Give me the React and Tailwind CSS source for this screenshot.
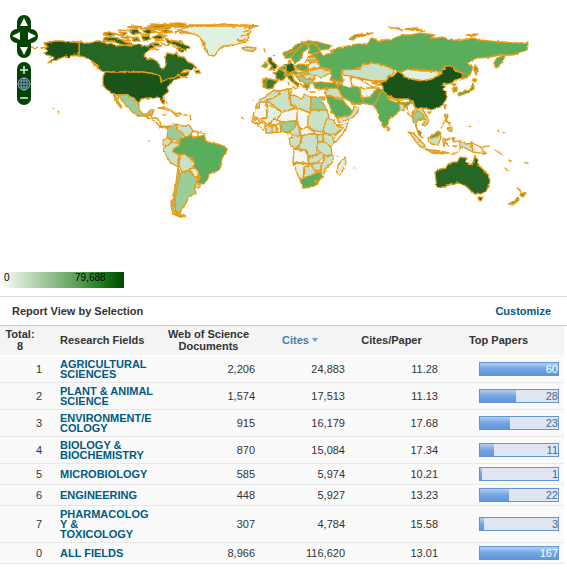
import React from 'react';
import clsx from 'clsx';

const SHADES = {
  top: '#1a5419',
  high: '#266726',
  upper: '#338033',
  mid: '#5aad5a',
  low: '#9acd9a',
  pale: '#c8e1c7',
  faint: '#e0f1df',
  none: '#f4f8f4',
};

// [shade, path] pairs, larger land first so small neighbours sit on top
const COUNTRIES = [
  // North America
  ['high', 'M79 42 85 43 90 43 97 41 103 42 107 44 111 43 116 46 124 45 131 46 138 44 143 46 148 46 151 44 155 47 152 49 146 52 144 56 147 59 153 59 158 62 160 66 163 69 166 65 165 58 167 53 172 54 177 53 180 57 184 57 188 62 193 64 196 68 190 70 184 70 181 73 189 72 188 75 185 77 181 77 179 75 174 78 168 79 162 82 160 76 155 74 143 72 105 72 100 70 97 65 92 61 87 58 79 56Z'],
  ['top', 'M44 43 50 42 55 41 62 41 67 42 79 42 79 56 74 55 69 58 66 56 61 58 57 60 48 63 54 58 51 56 47 55 44 53 48 51 46 49 41 48 48 47 45 45Z'],
  ['top', 'M105 72 143 72 155 74 160 76 161 82 168 79 174 78 180 75 180 78 174 80 171 83 169 85 168 90 167 93 163 96 163 99 164 104 162 103 160 98 157 97 151 99 148 98 141 99 139 103 136 101 134 98 131 97 127 95 117 95 113 94 109 91 106 89 103 85 103 77Z'],
  ['low', 'M117 95 127 95 131 97 134 98 136 101 139 104 139 110 143 114 148 114 150 110 154 110 152 115 148 117 144 116 138 116 132 112 130 109 126 106 123 101Z'],
  ['low', 'M113 94 117 98 119 103 122 107 121 108 117 103Z'],
  ['none', 'M147 117 150 114 152 118 157 118 160 122 161 126 165 127 169 126 168 128 164 128 160 127 156 122 151 119Z'],
  ['faint', 'M175 32 184 28 194 26 210 26 222 24 236 25 245 25 258 26 249 28 251 32 247 34 249 37 246 42 241 43 234 45 228 46 223 46 219 49 217 53 214 56 209 55 206 51 204 48 205 43 202 40 198 36 194 34 186 33Z'],
  ['high', 'M150 27 157 25 167 24 179 23 190 25 183 27 175 27 168 29 161 29Z'],
  ['high', 'M165 38 170 41 176 41 181 42 185 45 190 47 187 49 183 52 177 50 179 47 172 44 168 43Z'],
  ['high', 'M104 38 111 37 118 38 125 42 130 43 133 45 124 45 117 43 111 41 103 42Z'],
  ['high', 'M104 33 110 32 115 35 109 36ZM119 32 127 33 124 35ZM128 30 137 29 140 33 133 35ZM142 31 149 29 155 32 148 34ZM141 36 149 36 151 39 144 41ZM152 37 159 35 165 37 157 40ZM152 43 158 43 161 46 154 46ZM121 37 127 37 129 39ZM161 31 168 30 173 32 165 33ZM132 38 138 37 140 41 134 41ZM128 27 135 26 142 27 136 28Z'],
  ['high', 'M194 71 199 70 201 73 196 73Z'],
  ['pale', 'M242 48 247 47 256 48 255 50 249 51 244 50Z'],
  ['none', 'M158 108 164 107 171 110 175 112 171 112 165 109ZM173 114 180 113 182 115 176 116ZM184 115 187 115ZM165 101 167 103ZM190 115 191 120ZM163 115 166 115Z'],
  // South America
  ['low', 'M168 128 173 124 177 125 177 130 182 132 182 138 180 142 173 140 167 137Z'],
  ['pale', 'M177 124 183 126 190 126 193 131 190 135 185 138 182 132 177 130Z'],
  ['none', 'M193 131 198 132 205 134 203 137 193 137 191 134ZM198 132 198 137Z'],
  ['mid', 'M180 142 179 139 183 138 190 135 193 138 198 137 204 135 206 141 212 143 222 145 227 149 226 153 222 158 221 165 219 170 215 172 209 174 207 180 202 185 197 182 200 178 198 172 193 165 192 160 185 154 180 155 173 152 174 148 179 146Z'],
  ['pale', 'M163 148 167 146 172 142 179 143 179 146 174 148 173 152 179 155 178 167 170 162 166 155Z'],
  ['pale', 'M163 140 168 138 172 141 167 146 163 145Z'],
  ['pale', 'M180 155 185 154 192 160 195 163 192 168 188 172 182 172 179 165Z'],
  ['faint', 'M189 169 195 168 198 173 199 177 195 177Z'],
  ['low', 'M182 172 188 171 195 177 199 178 195 183 195 190 196 193 188 197 187 202 182 208 180 213 175 212 175 203 176 193 178 180Z'],
  ['pale', 'M196 183 201 186 198 188 195 187Z'],
  ['low', 'M178 167 180 175 178 183 176 193 174 203 176 212 184 216 180 217 173 214 171 206 173 197 176 183Z'],
  // Europe
  ['mid', 'M320 52 323 55 333 53 330 51 337 48 344 47 352 45 360 44 368 44 371 38 375 39 379 42 381 40 390 40 395 38 403 35 411 35 420 33 427 34 435 35 430 38 437 38 443 37 450 40 463 40 472 38 480 40 489 41 498 42 505 42 513 43 528 43 527 50 520 52 513 55 500 55 490 57 477 58 467 63 473 67 470 75 463 79 460 73 452 67 445 67 440 72 423 70 413 69 401 72 395 70 380 64 371 63 362 65 360 69 342 70 341 74 343 79 343 82 337 81 330 80 332 75 329 69 320 67 318 60 312 55Z'],
  ['mid', 'M505 55 503 62 500 65 496 68 494 63 497 58Z'],
  ['mid', 'M349 39 355 35 363 34 373 33 364 36 356 37 353 40ZM405 29 416 28 423 31 412 30ZM467 35 478 34 475 36ZM475 65 478 69 476 75 474 70Z'],
  ['mid', 'M283 53 290 50 294 47 298 44 308 41 318 42 332 46 329 49 320 50 314 46 307 43 302 46 297 51 294 57 290 58 285 58Z'],
  ['mid', 'M293 61 292 56 297 50 302 45 308 44 308 49 303 52 302 56 299 61 295 63Z'],
  ['mid', 'M308 44 314 43 318 47 320 52 312 54 308 53 310 49Z'],
  ['upper', 'M263 79 270 79 278 81 275 84 273 88 268 89 264 87Z'],
  ['upper', 'M263 79 266 80 266 88 263 87Z'],
  ['upper', 'M273 73 277 72 279 69 285 72 286 77 283 80 276 79 276 75Z'],
  ['high', 'M286 65 290 63 294 65 295 70 292 73 286 72Z'],
  ['mid', 'M288 61 291 60 290 64ZM281 67 286 65 285 70 280 69Z'],
  ['mid', 'M296 65 301 64 308 65 309 70 302 71 296 69Z'],
  ['mid', 'M284 74 291 73 291 75 285 76ZM291 72 297 71 300 73 295 75Z'],
  ['upper', 'M286 76 292 75 294 80 299 84 298 87 295 84 291 81 288 78ZM293 87 297 88ZM288 82 289 85Z'],
  ['high', 'M268 58 271 57 272 61 275 64 278 67 275 69 269 70 272 66 269 63Z'],
  ['mid', 'M262 66 266 62 268 65 265 68Z'],
  ['pale', 'M309 56 315 57 318 62 311 64 307 60ZM308 60 317 60Z'],
  ['faint', 'M308 65 312 62 318 62 320 66 319 68 308 69Z'],
  ['pale', 'M308 71 320 68 330 70 331 73 325 76 321 78 315 75 308 74Z'],
  ['low', 'M299 73 308 71 308 75 301 76Z'],
  ['pale', 'M303 76 308 74 314 75 315 79 306 79Z'],
  ['low', 'M296 76 302 76 306 79 314 80 312 83 306 84 303 82 299 80Z'],
  ['mid', 'M303 85 310 84 309 86 307 90 305 88ZM310 92 315 92Z'],
  // Asia
  ['mid', 'M313 83 321 82 329 83 337 82 339 87 331 88 325 89 315 88Z'],
  ['pale', 'M333 80 342 83 344 86 338 86Z'],
  ['pale', 'M342 70 360 69 362 65 371 63 380 64 388 67 395 70 392 75 388 76 387 81 378 81 372 81 363 79 358 78 350 76 343 75Z'],
  ['none', 'M350 77 358 78 363 79 367 83 372 86 372 89 365 89 360 88 352 86Z'],
  ['none', 'M358 78 372 81 380 82 385 83 380 85 373 87 366 83Z'],
  ['pale', 'M372 83 380 82 386 80 380 85Z'],
  ['mid', 'M338 83 344 86 350 88 354 86 360 88 361 97 364 103 358 104 352 103 346 99 343 97 338 89Z'],
  ['none', 'M360 89 366 88 376 88 380 88 374 92 371 97 363 98 361 94Z'],
  ['mid', 'M362 98 371 97 374 92 378 88 385 90 380 95 377 101 373 105 364 103Z'],
  ['mid', 'M380 93 385 90 389 97 397 100 406 103 412 99 413 103 408 107 402 107 399 111 393 117 389 119 388 124 384 128 380 121 377 110 373 105 377 101Z'],
  ['pale', 'M388 97 398 101 397 103 389 100ZM399 104 404 104 404 111 400 109ZM387 126 390 129 388 131 387 129Z'],
  ['faint', 'M401 72 408 69 414 70 423 71 430 71 440 72 438 75 432 79 423 81 411 79 405 77Z'],
  ['top', 'M380 83 386 81 389 77 393 76 398 71 402 74 405 77 411 79 423 81 432 79 438 76 442 73 441 71 445 70 445 66 452 66 455 71 463 73 462 78 455 80 452 83 447 84 444 83 442 85 446 87 443 89 447 94 447 98 444 103 440 107 431 110 427 108 421 109 415 108 413 101 408 99 397 99 389 96 383 91 383 87Z'],
  ['top', 'M428 112 431 112 429 114Z'],
  ['mid', 'M452 84 456 84 454 86ZM453 88 457 87 457 91 453 92Z'],
  ['mid', 'M458 93 464 91 470 89 473 83 474 87 473 91 464 94 459 96ZM472 80 478 79 475 82Z'],
  ['low', 'M444 105 446 105 445 109Z'],
  ['pale', 'M325 90 331 88 338 88 340 93 343 98 337 98 331 96 326 95Z'],
  ['mid', 'M326 96 331 96 337 99 343 100 348 107 353 111 350 115 337 118 332 112Z'],
  ['pale', 'M337 118 350 115 353 111 354 106 359 108 357 113 352 118 344 121 339 123Z'],
  ['none', 'M407 106 412 102 414 106 416 109 412 113 414 121 411 116 408 114Z'],
  ['pale', 'M416 108 422 108 427 117 429 121 425 126 422 125 426 120 421 114Z'],
  ['low', 'M413 113 418 111 424 115 423 120 419 119 416 123 417 129 413 121Z'],
  ['mid', 'M417 129 421 132 422 138 418 134Z'],
  ['pale', 'M409 132 413 133 420 140 425 146 422 148 416 142Z'],
  ['pale', 'M424 149 431 150 439 151 449 153 441 153 431 152Z'],
  ['pale', 'M428 138 434 138 440 133 441 138 438 145 431 144Z'],
  ['mid', 'M428 138 434 134 438 131 441 133 438 136 433 138Z'],
  ['pale', 'M443 139 450 139 445 141 448 146 445 143 444 147ZM452 138 454 138 453 141ZM453 146 457 146ZM451 154 458 152ZM460 150 460 147Z'],
  ['low', 'M445 114 448 116 446 121ZM446 121 451 122 450 125ZM447 128 452 127 452 132 448 130ZM441 128 445 121Z'],
  ['pale', 'M458 141 462 141 466 144 472 143 473 152 465 148 460 146Z'],
  ['none', 'M472 143 481 147 484 152 487 154 480 153 473 152ZM483 147 489 146Z'],
  // Oceania
  ['high', 'M435 172 440 169 446 168 448 164 453 162 457 162 460 157 467 158 466 162 472 165 475 156 478 160 479 166 485 171 488 176 490 180 489 186 486 191 481 194 475 194 471 191 467 187 464 185 458 183 450 185 443 187 437 188 436 181Z'],
  ['high', 'M478 197 483 197 481 201 479 200Z'],
  ['mid', 'M517 188 520 190 522 193 526 193 523 197 520 196 521 192ZM518 198 519 200 513 205 509 204Z'],
  ['faint', 'M494 150 497 151ZM498 152 503 155ZM509 160 511 162ZM505 168 509 171ZM525 163 528 163Z'],
  // Africa
  ['pale', 'M265 97 270 93 274 90 279 91 279 95 271 99 266 103 255 108 259 100Z'],
  ['pale', 'M266 100 271 99 279 95 279 91 290 89 289 94 291 104 295 108 282 112Z'],
  ['pale', 'M288 89 292 89 290 97Z'],
  ['pale', 'M290 96 294 95 301 99 305 95 311 97 311 113 299 108 291 104Z'],
  ['low', 'M311 97 323 97 325 99 322 101 327 110 311 110Z'],
  ['none', 'M253 117 255 108 259 108 260 102 266 102 267 118 258 118Z'],
  ['faint', 'M267 104 282 112 281 116 275 118 268 125 260 119 267 118Z'],
  ['none', 'M282 112 297 108 298 115 296 121 283 122 277 120Z'],
  ['none', 'M297 108 310 113 307 127 300 129 297 121Z'],
  ['pale', 'M311 110 327 110 329 117 326 123 323 132 314 131 308 126 308 118Z'],
  ['pale', 'M327 118 333 120 337 126 343 128 336 134 328 135 323 130Z'],
  ['none', 'M336 125 342 125 348 123 345 131 335 143 334 137 343 128Z'],
  ['faint', 'M252 119 257 119 261 123 256 124 252 122Z'],
  ['none', 'M257 125 262 122 266 126 266 132 261 128Z'],
  ['pale', 'M266 126 272 126 272 133 266 133ZM272 126 276 125 277 132 272 133Z'],
  ['none', 'M269 124 275 119 281 122 276 125ZM277 125 280 123 281 132 277 132Z'],
  ['low', 'M282 122 296 121 296 127 289 133 281 131Z'],
  ['pale', 'M296 122 299 129 300 135 291 135 290 131 295 128Z'],
  ['none', 'M300 130 307 127 315 133 301 136Z'],
  ['pale', 'M289 138 297 137 302 135 300 144 295 149 290 144Z'],
  ['pale', 'M302 136 309 134 317 134 319 141 317 148 317 155 308 156 306 150 297 149 301 143Z'],
  ['pale', 'M323 133 333 137 334 144 330 146 324 142ZM317 135 323 134 323 141 318 142Z'],
  ['pale', 'M318 142 324 142 331 147 332 155 324 156 317 149Z'],
  ['none', 'M294 149 305 150 308 156 308 163 293 163Z'],
  ['pale', 'M308 157 317 155 320 152 324 156 317 163 309 164Z'],
  ['faint', 'M293 163 310 164 304 168 303 181 299 178Z'],
  ['pale', 'M304 167 310 165 317 172 311 175 304 178Z'],
  ['pale', 'M311 165 317 163 322 163 321 170 316 171Z'],
  ['pale', 'M324 156 333 155 333 162 325 169 323 178 320 172 323 162Z'],
  ['mid', 'M300 180 304 178 312 175 319 172 322 176 318 183 313 187 303 188Z'],
  ['none', 'M314 181 317 180 317 183Z'],
  ['faint', 'M345 157 346 163 342 172 340 175 337 173 338 165Z'],
];

// stray islets and ragged arctic channels, drawn as outline only
const ISLETS =
  'M32 47 37 48M34 49 38 47M53 108 54 109M57 111 59 113M72 41 78 43M91 61 96 66 101 71M97 64 100 69M104 40 116 42M103 35 112 37M112 33 124 36M118 30 132 31M122 40 132 41M126 36 139 39M134 33 150 35M140 29 156 28M144 28 165 27M147 26 178 24M150 31 163 33M152 30 172 27M158 34 168 36M150 24 168 25M165 26 186 25M160 28 180 26M170 40 183 43M172 46 181 49M176 48 187 50M149 48 159 50M160 42 168 46M155 41 164 40M182 76 188 78M173 205 176 209M174 210 182 215M175 213 186 217M174 214 181 217M172 202 174 207M176 25 215 25M186 26 258 26M178 30 190 33M201 39 203 46M203 42 206 50M237 40 245 41M238 42 246 39M240 36 250 34M243 31 249 31M244 28 252 28M264 48 265 53M273 55 274 56M241 117 244 119M149 140 149 141M253 100 253 101M253 121 257 123M337 156 338 157M354 168 354 169M357 168 357 169M469 126 470 127M478 121 479 122M497 130 498 131M503 132 504 133M413 29 424 31M300 83 304 88M305 63 309 56M286 55 293 50M388 27 403 30M318 87 319 91M430 153 447 154M449 121 451 126M453 142 457 141';

const FIELDS = [
  { rank: 1, name: 'AGRICULTURAL\nSCIENCES', docs: '2,206', cites: '24,883', ratio: '11.28', top: 60 },
  { rank: 2, name: 'PLANT & ANIMAL\nSCIENCE', docs: '1,574', cites: '17,513', ratio: '11.13', top: 28 },
  { rank: 3, name: 'ENVIRONMENT/E\nCOLOGY', docs: '915', cites: '16,179', ratio: '17.68', top: 23 },
  { rank: 4, name: 'BIOLOGY &\nBIOCHEMISTRY', docs: '870', cites: '15,084', ratio: '17.34', top: 11 },
  { rank: 5, name: 'MICROBIOLOGY', docs: '585', cites: '5,974', ratio: '10.21', top: 1 },
  { rank: 6, name: 'ENGINEERING', docs: '448', cites: '5,927', ratio: '13.23', top: 22 },
  { rank: 7, name: 'PHARMACOLOG\nY &\nTOXICOLOGY', docs: '307', cites: '4,784', ratio: '15.58', top: 3 },
  { rank: 0, name: 'ALL FIELDS', docs: '8,966', cites: '116,620', ratio: '13.01', top: 167 },
];

const MAX_TOP = 60;

const WorldMap = () => (
  <svg viewBox="0 0 567 272" className="block w-full" role="img" aria-label="World map">
    <defs>
      <filter id="coast" x="0" y="0" width="567" height="272" filterUnits="userSpaceOnUse" colorInterpolationFilters="sRGB">
        <feTurbulence type="fractalNoise" baseFrequency="0.3" numOctaves="1" seed="4" />
        <feDisplacementMap in="SourceGraphic" scale="3" xChannelSelector="R" yChannelSelector="G" />
      </filter>
    </defs>
    <g filter="url(#coast)" stroke="#e99a14" strokeWidth="1.3" strokeLinejoin="round">
      {COUNTRIES.map(([shade, d]) => (
        <path key={d} d={d} fill={SHADES[shade]} />
      ))}
      <path d={ISLETS} fill="none" />
    </g>
  </svg>
);

const PanButton = ({ label, points, className }) => (
  <button type="button" aria-label={label} className={clsx('flex items-center justify-center', className)}>
    <svg viewBox="0 0 10 10" className="h-[10px] w-[10px]">
      <polygon points={points} fill="#fff" />
    </svg>
  </button>
);

const MapControls = () => (
  <div className="absolute left-[10px] top-[15px] flex flex-col items-center gap-1">
    <div className="relative h-[43px] w-[28px]">
      <svg viewBox="0 0 28 43" className="absolute inset-0 h-full w-full" fill="#014401">
        <rect x="7" y="0" width="14" height="43" rx="7" />
        <rect x="0" y="14" width="28" height="14" rx="7" />
      </svg>
      <div className="relative grid h-full grid-cols-2 grid-rows-3">
        <PanButton label="Pan up" points="5,1 9,9 1,9" className="col-span-2" />
        <PanButton label="Pan left" points="0,5 8,1 8,9" />
        <PanButton label="Pan right" points="10,5 2,1 2,9" />
        <PanButton label="Pan down" points="5,9 9,1 1,1" className="col-span-2" />
      </div>
    </div>
    <div className="flex h-[43px] w-[14px] flex-col items-center justify-between rounded-full bg-[#014401]">
      <button type="button" aria-label="Zoom in">
        <svg viewBox="0 0 14 14" className="block h-[14px] w-[14px]" stroke="#e6efe6" strokeWidth="1.5">
          <path d="M7 4v8M3 8h8" />
        </svg>
      </button>
      <button type="button" aria-label="Zoom to world">
        <svg viewBox="0 0 14 14" className="block h-[14px] w-[14px]" fill="none" stroke="#a3a6ee">
          <circle cx="7" cy="7" r="6" />
          <ellipse cx="7" cy="7" rx="3" ry="6" strokeWidth="0.8" />
          <path d="M7 1v12M1 7h12M2 4h10M2 10h10" strokeWidth="0.8" />
        </svg>
      </button>
      <button type="button" aria-label="Zoom out">
        <svg viewBox="0 0 14 14" className="block h-[14px] w-[14px]" stroke="#e6efe6" strokeWidth="1.5">
          <path d="M3 7h8" />
        </svg>
      </button>
    </div>
  </div>
);

const TopPapersBar = ({ value }) => {
  const full = value >= MAX_TOP;
  return (
    <div className="relative ml-auto h-[14px] w-[80px] border border-[#6394d3] bg-[#dfe6f2]">
      <div
        className="h-full bg-linear-to-b from-[#b3cdf0] via-[#75a3e0] to-[#5f96dc]"
        style={{ width: `${Math.min(100, Math.max(2, (value / MAX_TOP) * 100))}%` }}
      />
      <span className={clsx('absolute inset-y-0 right-0 leading-[13px]', full ? 'text-white' : 'text-[#4a6796]')}>
        {value}
      </span>
    </div>
  );
};

const App = () => (
  <div className="bg-white font-['Liberation_Sans',Arial,sans-serif] text-[11px] text-[#333]">
    <div className="relative">
      <WorldMap />
      <MapControls />
    </div>

    <div className="flex h-4 w-[124px] bg-linear-to-r from-white via-[#1f821f] via-80% to-[#014401] pl-1 text-[10px] leading-[12px] text-black">
      <span className="w-[71px]">0</span>
      <span>79,688</span>
    </div>

    <div className="mt-2 flex h-[30px] items-center justify-between border-y border-t-[#ddd] border-b-[#ccc] pl-3 pr-4 font-bold">
      <h2>Report View by Selection</h2>
      <a href="#customize" className="text-[#005a84]">Customize</a>
    </div>

    <div className="pr-[3px]">
      <table className="w-full table-fixed border-collapse">
        <colgroup>
          <col className="w-[50px]" />
          <col className="w-[115px]" />
          <col className="w-[95px]" />
          <col className="w-[90px]" />
          <col className="w-[93px]" />
          <col />
        </colgroup>
        <thead>
          <tr className="h-[29px] border-b border-white bg-[#f4f4f4] leading-[12px]">
            <th className="pr-[10px]">Total:<br />8</th>
            <th className="pl-[10px] text-left">Research Fields</th>
            <th className="whitespace-nowrap pr-2">Web of Science<br />Documents</th>
            <th className="pr-[10px]">
              <button type="button" className="inline-flex items-center gap-[3px] font-bold text-[#4f7ba3]">
                Cites
                <svg viewBox="0 0 6 4" className="h-1 w-[6px]" fill="#6f9fd8">
                  <path d="M0 0h6L3 4z" />
                </svg>
              </button>
            </th>
            <th className="pr-[10px]">Cites/Paper</th>
            <th className="pr-[10px]">Top Papers</th>
          </tr>
        </thead>
        <tbody>
          {FIELDS.map((field) => (
            <tr key={field.rank} className="border-b border-[#e8e8e8] bg-[#fafafa] text-right leading-[14px]">
              <td className="pr-2">{field.rank}</td>
              <td className="py-[3px] pl-[10px] text-left font-bold leading-[10px]">
                <a href="#field" className="block whitespace-pre-line text-[#005a84]">{field.name}</a>
              </td>
              <td className="pr-[5px]">{field.docs}</td>
              <td className="pr-[5px]">{field.cites}</td>
              <td className="pr-[5px]">{field.ratio}</td>
              <td className="py-[3px] pr-[5px]">
                <TopPapersBar value={field.top} />
              </td>
            </tr>
          ))}
        </tbody>
      </table>
    </div>
  </div>
);

export default App;
